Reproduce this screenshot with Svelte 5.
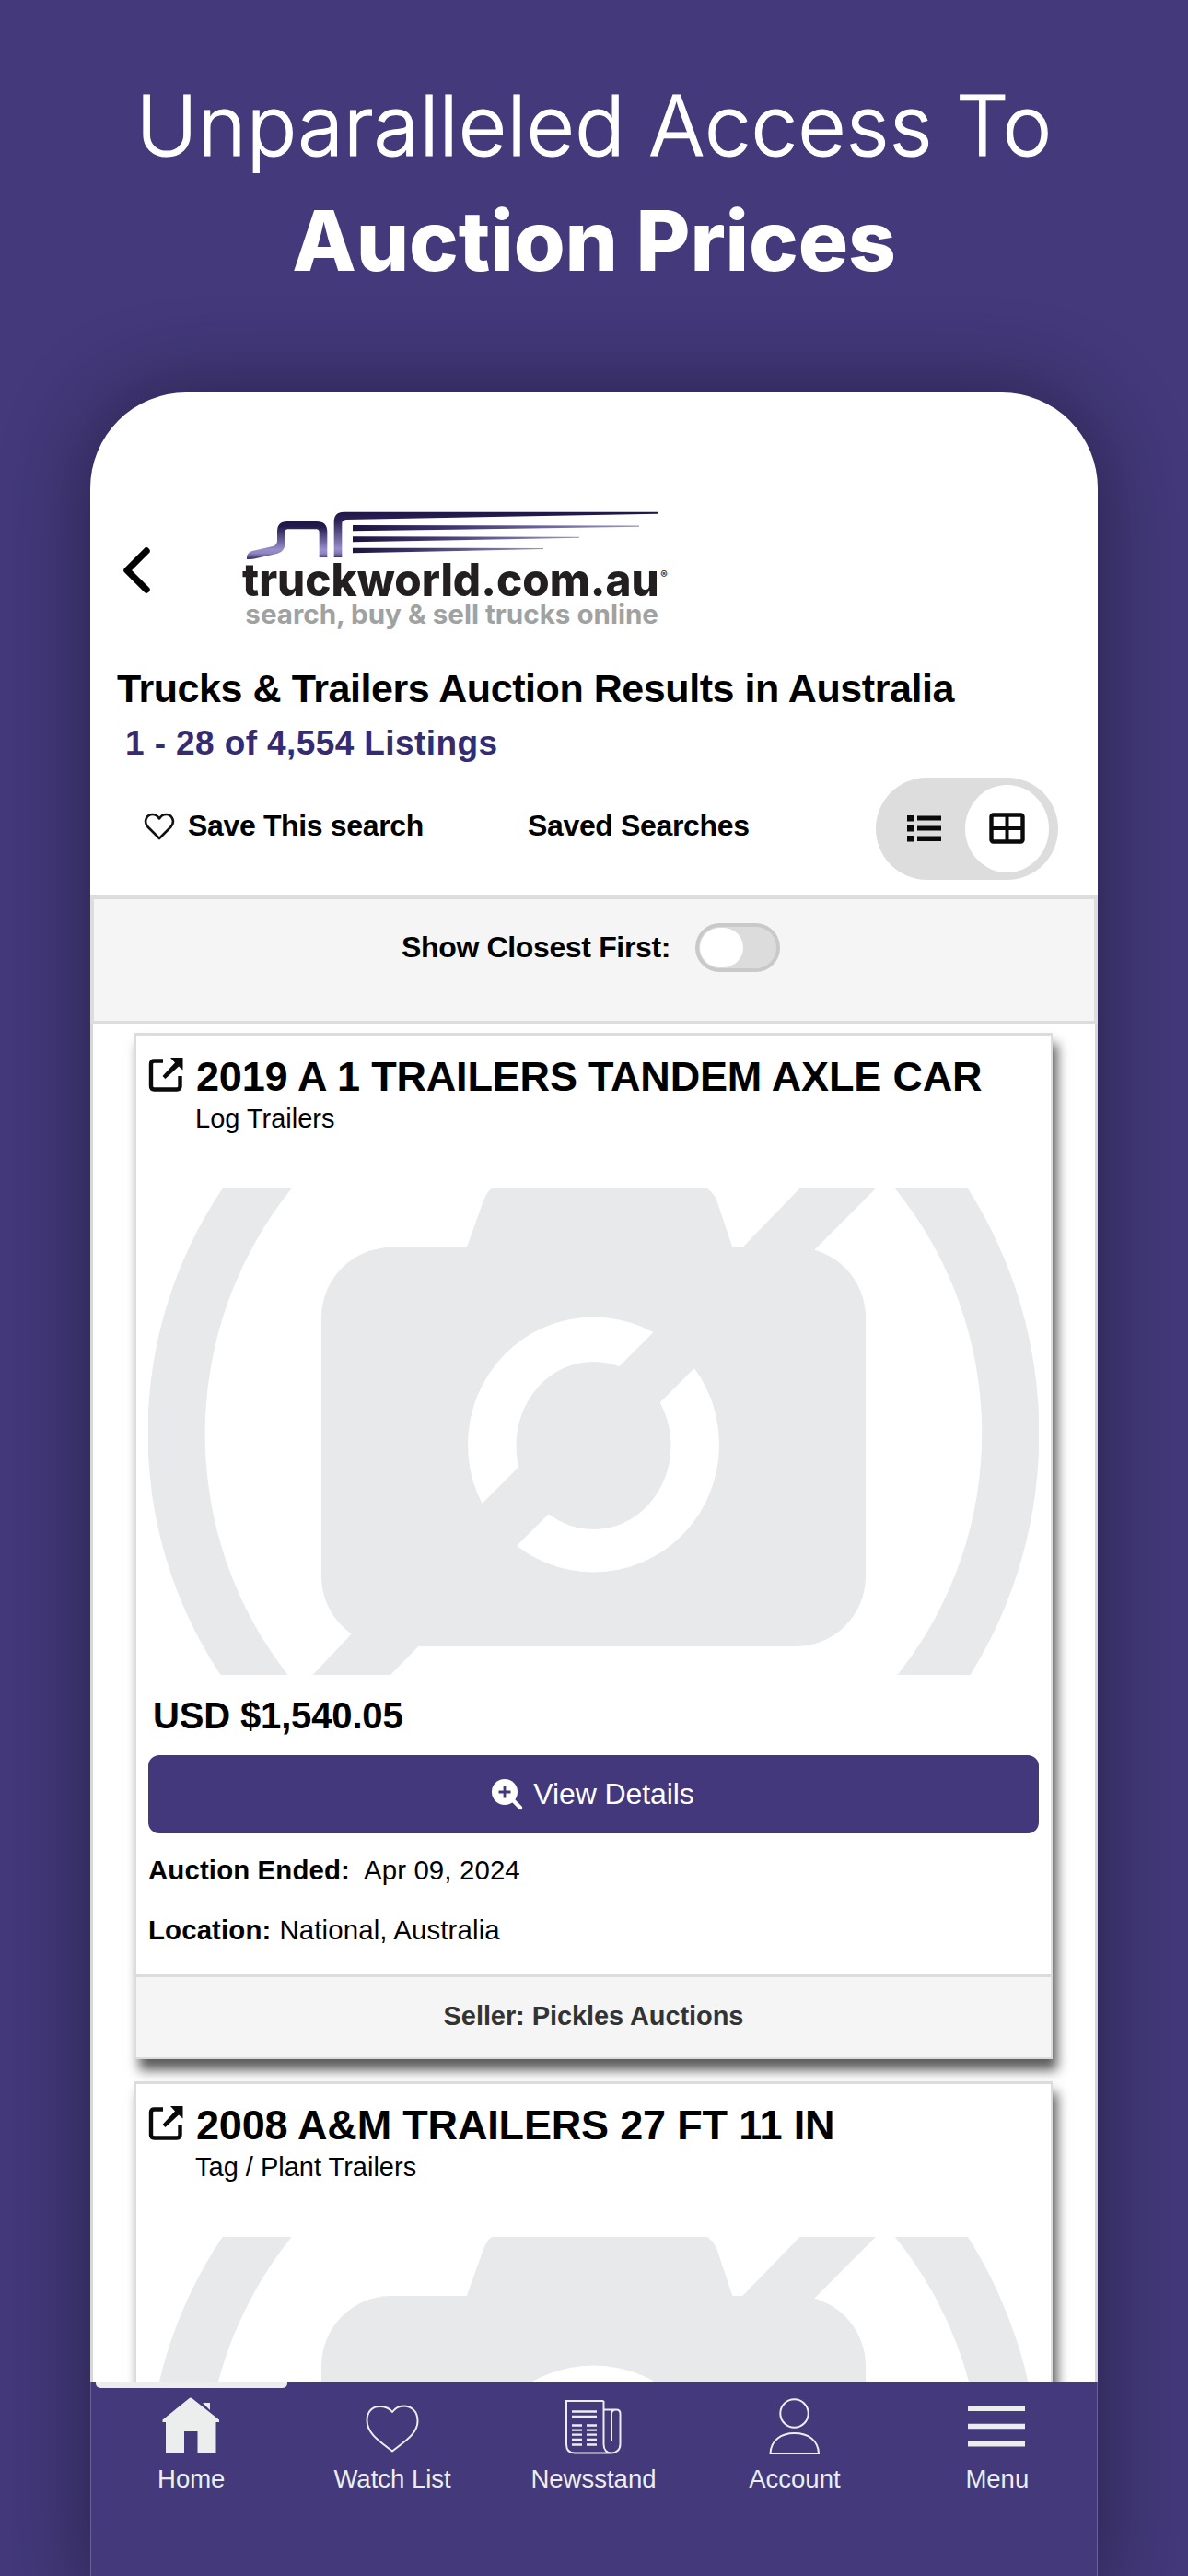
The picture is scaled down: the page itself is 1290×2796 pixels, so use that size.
<script>
  const listings = [
    {
      title: '2019 A 1 TRAILERS TANDEM AXLE CAR',
      category: 'Log Trailers',
      price: 'USD $1,540.05',
      ended: 'Apr 09, 2024',
      location: 'National, Australia',
      seller: 'Pickles Auctions'
    },
    {
      title: '2008 A&M TRAILERS 27 FT 11 IN',
      category: 'Tag / Plant Trailers',
      price: '',
      ended: '',
      location: '',
      seller: ''
    }
  ];
</script>

<main class="page">
  <h1 class="headline">
    <span class="light">Unparalleled Access To</span>
    <span class="strong">Auction Prices</span>
  </h1>

  <div class="phone">
    <header class="top">
      <svg class="back" viewBox="0 0 40 60" width="40" height="60">
        <path d="M31 9 L10 30 L31 51" fill="none" stroke="#000" stroke-width="7.400" stroke-linecap="round" stroke-linejoin="round" />
      </svg>
      <svg class="logo" viewBox="0 0 1500 450" width="500" height="150">
        <defs>
          <linearGradient id="cab" gradientUnits="userSpaceOnUse" x1="0" y1="60" x2="0" y2="186">
            <stop offset="0" stop-color="#1f1646" />
            <stop offset="0.15" stop-color="#231a4c" />
            <stop offset="0.75" stop-color="#968fc9" />
            <stop offset="0.85" stop-color="#8d85c0" />
            <stop offset="1" stop-color="#33285f" />
          </linearGradient>
          <linearGradient id="bar" gradientUnits="userSpaceOnUse" x1="0" y1="32" x2="0" y2="182">
            <stop offset="0" stop-color="#1f1646" />
            <stop offset="0.2" stop-color="#2d2359" />
            <stop offset="0.8" stop-color="#968fc9" />
            <stop offset="0.9" stop-color="#8078b3" />
            <stop offset="1" stop-color="#33285f" />
          </linearGradient>
          <linearGradient id="streak" x1="0" y1="0" x2="1" y2="0">
            <stop offset="0" stop-color="#1c133f" />
            <stop offset="0.35" stop-color="#40366f" />
            <stop offset="1" stop-color="#9a94cc" />
          </linearGradient>
        </defs>
        <path fill="url(#cab)" d="M84 186 V176 Q88 163 102 159 L168 144 Q183 140 183 125 V95 Q183 63 215 63 H312 Q346 63 346 97 V180 H320 V99 Q320 88 310 88 H218 Q208 88 208 99 V135 Q208 160 185 167 L112 184 Q100 187 84 186Z" />
        <path fill="url(#bar)" d="M368 180 V64 Q368 32 400 32 H1422 V38 L408 57 Q394 58 394 70 V180Z" />
        <path fill="url(#streak)" d="M429 75 L1362 76.500 V80 L429 94Z" />
        <path fill="url(#streak)" d="M429 112 L1167 113 V116 L429 130Z" />
        <path fill="url(#streak)" d="M429 149 L1050 150 V153 L429 166Z" />
        <text class="brand" x="69" y="307" textLength="1358" lengthAdjust="spacingAndGlyphs">truckworld.com.au</text>
        <text class="reg" x="1432" y="249">®</text>
        <text class="tag" x="79" y="397" textLength="1346" lengthAdjust="spacingAndGlyphs">search, buy &amp; sell trucks online</text>
      </svg>
    </header>

    <h2 class="title">Trucks &amp; Trailers Auction Results in Australia</h2>
    <p class="count">1 - 28 of 4,554 Listings</p>

    <div class="actions">
      <svg class="heart" viewBox="0 0 34 30" width="34" height="30">
        <path d="M17 28 L4.500 15.500 C-1 9 4 2 9.500 2 C13 2 15.500 4 17 6.500 C18.500 4 21 2 24.500 2 C30 2 35 9 29.500 15.500 Z" fill="none" stroke="#111" stroke-width="2.600" stroke-linejoin="round" />
      </svg>
      <span class="save">Save This search</span>
      <span class="saved">Saved Searches</span>
      <div class="views">
        <svg class="list-icon" viewBox="0 0 38 30" width="38" height="30">
          <path d="M0 1h8v6.500H0zM11 1.500h26v5H11zM0 11.500h8v7H0zM11 12.500h26v5H11zM0 23h8v6.500H0zM11 23.500h26v5.500H11z" fill="#0a0a0a" />
        </svg>
        <span class="knob">
          <svg viewBox="0 0 40 34" width="40" height="34">
            <rect x="2.500" y="2.500" width="34" height="29" rx="2" fill="none" stroke="#0a0a0a" stroke-width="4.400" />
            <path d="M19.500 2V32M2 17H37" stroke="#0a0a0a" stroke-width="4" />
          </svg>
        </span>
      </div>
    </div>

    <div class="closest">
      <span>Show Closest First:</span>
      <i class="switch"></i>
    </div>

    <section class="list">
      {#each listings as item}
        <article class="card">
          <div class="body">
            <div class="name">
              <svg viewBox="0 0 40 40" width="40" height="40">
                <path d="M16 5.500H6.500Q3 5.500 3 9V33Q3 36.500 6.500 36.500H31Q34.500 36.500 34.500 33V22" fill="none" stroke="#0a0a0a" stroke-width="4.400" />
                <path d="M24 2H37.500V15.500L33 11.500L18.500 25L15.500 22L29 7.500Z" fill="#0a0a0a" />
              </svg>
              <h3>{item.title}</h3>
            </div>
            <p class="category">{item.category}</p>
            <svg class="photo" viewBox="161 1290 967 528" width="967" height="528">
              <g fill="#e8e9eb">
                <path d="M241.600 1290 A475 475 0 0 0 239.500 1818 H312.500 A425 425 0 0 1 316.600 1290Z" />
                <path d="M1051 1290 A496 496 0 0 1 1053.600 1818 H974.500 A421 421 0 0 0 971.800 1290Z" />
                <rect x="349" y="1354" width="591" height="433" rx="76" />
                <path d="M506 1356 L524 1306 Q528 1294 534 1290 H768 Q774 1294 778 1302 L796 1356Z" />
                <path d="M868.400 1290 H950.800 L885 1356 L860 1380 L781 1380Z" />
                <path d="M339.600 1818 L385 1770 L420 1735 L500 1740 L424 1818Z" />
              </g>
              <path fill="#fff" fill-rule="evenodd" d="M508 1568 A136.500 138.500 0 1 1 781 1568 A136.500 138.500 0 1 1 508 1568Z M560.500 1569 A84 91 0 1 0 728.500 1569 A84 91 0 1 0 560.500 1569Z" />
              <path fill="#e8e9eb" d="M725.500 1430 L785 1454 L561 1678 L545 1694 L500 1655.500Z" />
            </svg>
            {#if item.price}
              <p class="price">{item.price}</p>
              <div class="button">
                <svg viewBox="0 0 36 36" width="36" height="36">
                  <circle cx="15" cy="15" r="14" fill="#fff" />
                  <path d="M24 24L32 32" stroke="#fff" stroke-width="4.500" stroke-linecap="round" />
                  <path d="M15 8.500V21.500M8.500 15H21.500" stroke="#43387b" stroke-width="2.800" />
                </svg>
                <span>View Details</span>
              </div>
              <p class="fact ended"><b>Auction Ended:</b><span>{item.ended}</span></p>
              <p class="fact place"><b>Location:</b><span>{item.location}</span></p>
            {/if}
          </div>
          {#if item.seller}
            <div class="seller">Seller: {item.seller}</div>
          {/if}
        </article>
      {/each}
    </section>

    <nav class="tabs">
      <div class="tab active">
        <svg viewBox="1 0 64 64" width="64" height="64" fill="#eceeee">
          <path d="M32 2.500 Q33 2.500 34 3.500 L63 26.500 V29 H59.500 V62 H39.500 V39 H25 V62 H5 V29 H1.500 V26.500 L30 3.500 Q31 2.500 32 2.500Z" />
          <path d="M45 8H53V16Z" />
        </svg>
        <span>Home</span>
      </div>
      <div class="tab">
        <svg viewBox="0 0 64 64" width="64" height="64" fill="none" stroke="#eceeee" stroke-width="2" stroke-linejoin="round">
          <path d="M32 60.500 C20 51 4.500 42 4.500 27 C4.500 17 11 12 18 12 C25 12 29 14 32 18 C35 14 38 11.500 44 11.500 C53 11.500 59.500 17 59.500 28 C59.500 42 44 51 32 60.500Z" />
        </svg>
        <span>Watch List</span>
      </div>
      <div class="tab">
        <svg viewBox="0 0 64 64" width="64" height="64" fill="none" stroke="#eceeee" stroke-width="2">
          <path d="M43.500 6H3V53Q3 62.500 12 62.500H52M43.500 6V53C43.500 59 47 62.500 52 62.500C57 62.500 61.500 59 61.500 53V20C61.500 17 60 15.500 57.500 15.500H43.500M52 50V20C52 17 53.500 15.500 57 15.500" />
          <path d="M9 17.500H36M9 23H36M9 32.500H20M25 32.500H36M9 37.700H20M25 37.700H36M9 42.700H20M25 42.700H36M9 48H20M25 48H36M9 53.500H20M25 53.500H36" stroke-width="2.300" />
        </svg>
        <span>Newsstand</span>
      </div>
      <div class="tab">
        <svg viewBox="0 0 64 64" width="64" height="64" fill="none" stroke="#eceeee" stroke-width="2">
          <ellipse cx="31.500" cy="19.500" rx="15.200" ry="15.300" />
          <path d="M5.500 63 C6 49 17 41 31.500 41 C47 41 57.500 49 58 63Z" />
        </svg>
        <span>Account</span>
      </div>
      <div class="tab">
        <svg viewBox="0 0 64 64" width="64" height="64" stroke="#eceeee" stroke-width="5.600">
          <path d="M2 14.300H64M2 33.500H64M2 52.800H64" />
        </svg>
        <span class="wide">Menu</span>
      </div>
    </nav>
  </div>
</main>

<style>
  :global(body) {
    background: #43397b;
  }
  h1, h2, h3, p {
    margin: 0;
  }
  svg {
    display: block;
    flex: none;
  }
  .page {
    width: 1290px;
    height: 2796px;
    overflow: hidden;
    background: #43397b;
    font-family: "Liberation Sans", Arial, sans-serif;
    color: #000;
  }
  .headline {
    height: 426px;
    box-sizing: border-box;
    padding-top: 74px;
    display: flex;
    flex-direction: column;
    align-items: center;
    font-family: Inter, sans-serif;
    font-size: 90.500px;
    line-height: 125px;
    color: #fff;
    white-space: nowrap;
  }
  .light {
    font-weight: 300;
    letter-spacing: 0.100px;
    -webkit-text-stroke: 1.200px #fff;
  }
  .strong {
    font-weight: 800;
    letter-spacing: -0.150px;
  }
  .phone {
    width: 1094px;
    height: 2400px;
    margin: 0 auto;
    border-radius: 104px 104px 0 0;
    background: #fff;
    box-shadow: 0 0 96px rgba(0, 0, 0, 0.42);
  }
  .top {
    height: 269px;
    box-sizing: border-box;
    padding: 119px 0 0 30px;
    display: flex;
    align-items: flex-start;
  }
  .back {
    margin-top: 44px;
  }
  .logo {
    margin-left: 72px;
  }
  .brand {
    font: 800 148px Inter, sans-serif;
    fill: #231f20;
  }
  .reg {
    font: 700 34px Inter, sans-serif;
    fill: #231f20;
  }
  .tag {
    font: 700 86px Inter, sans-serif;
    fill: #a0a2a2;
  }
  .title {
    margin-top: 22px;
    padding-left: 29px;
    font-size: 43px;
    line-height: 60px;
    letter-spacing: -0.430px;
    white-space: nowrap;
  }
  .count {
    padding-left: 38px;
    font-size: 37px;
    font-weight: 700;
    line-height: 60px;
    letter-spacing: 0.400px;
    color: #342b71;
  }
  .actions {
    height: 134px;
    box-sizing: border-box;
    padding: 0 43px 9px 58px;
    display: flex;
    align-items: center;
    font-size: 32px;
    font-weight: 700;
    letter-spacing: -0.350px;
    white-space: nowrap;
  }
  .heart {
    margin-bottom: 5px;
  }
  .save {
    width: 368px;
    padding: 0 0 6px 14px;
    box-sizing: border-box;
  }
  .saved {
    flex: 1;
    padding: 0 0 6px 15px;
  }
  .views {
    width: 198px;
    height: 111px;
    box-sizing: border-box;
    padding: 0 10px 0 34px;
    border-radius: 56px;
    background: #ddd;
    display: flex;
    align-items: center;
    justify-content: space-between;
  }
  .list-icon {
    margin-bottom: 2px;
  }
  .knob {
    width: 91px;
    height: 95px;
    box-sizing: border-box;
    padding-bottom: 2px;
    border-radius: 50%;
    background: #fff;
    display: flex;
    align-items: center;
    justify-content: center;
  }
  .closest {
    height: 140px;
    box-sizing: border-box;
    border: solid #dcdddc;
    border-width: 5px 4px 3px;
    padding: 26px 0 0 334px;
    background: #f5f5f5;
    display: flex;
    font-size: 32px;
    font-weight: 700;
    letter-spacing: -0.350px;
    line-height: 52px;
  }
  .switch {
    width: 92px;
    height: 53px;
    box-sizing: border-box;
    margin-left: 27px;
    border: 4px solid #c9c9c9;
    border-radius: 27px;
    background: #dcdcdc;
  }
  .switch::before {
    content: "";
    display: block;
    width: 47px;
    height: 43px;
    margin: 1px;
    border-radius: 22px;
    background: #fff;
  }
  .list {
    height: 1474px;
    box-sizing: border-box;
    padding: 10px 45px 0;
    border: solid #d6d8d8;
    border-width: 0 3px;
    overflow: hidden;
    display: flex;
    flex-direction: column;
    gap: 24px;
  }
  .card {
    flex: none;
    width: 997px;
    box-sizing: border-box;
    border: solid #dcdcdc;
    border-width: 3px 2px 2px;
    background: #fff;
    box-shadow: 5px 12px 12px rgba(0, 0, 0, 0.640);
  }
  .body {
    padding: 17px 13px 28px;
  }
  .name {
    display: flex;
    height: 56px;
    line-height: 56px;
    gap: 12px;
  }
  .name svg {
    margin-top: 5px;
  }
  h3 {
    font-size: 45px;
    letter-spacing: -0.180px;
    white-space: nowrap;
  }
  .category {
    padding-left: 51px;
    font-size: 29px;
    line-height: 34px;
  }
  .photo {
    margin-top: 59px;
  }
  .price {
    margin-top: 14px;
    padding-left: 5px;
    font-size: 40px;
    font-weight: 700;
    letter-spacing: -0.150px;
    line-height: 60px;
  }
  .button {
    height: 85px;
    box-sizing: border-box;
    margin-top: 13px;
    padding-right: 2px;
    border-radius: 12px;
    background: #43387b;
    color: #fff;
    display: flex;
    align-items: center;
    justify-content: center;
    gap: 10px;
    font-size: 32px;
    letter-spacing: -0.100px;
  }
  .fact {
    margin-top: 25px;
    display: flex;
    gap: 9px;
    font-size: 29.400px;
    letter-spacing: 0.130px;
    line-height: 40px;
  }
  .ended {
    margin-top: 20px;
    gap: 15px;
  }
  .seller {
    height: 87px;
    box-sizing: content-box;
    border-top: 3px solid #dcdcdc;
    background: #f5f5f5;
    color: #333;
    font-size: 29px;
    font-weight: 700;
    letter-spacing: -0.080px;
    line-height: 84px;
    text-align: center;
  }
  .tabs {
    height: 241px;
    box-sizing: border-box;
    border: solid #6a6298;
    border-width: 0 1px;
    background: #43397b;
    display: grid;
    grid-template-columns: repeat(5, 1fr);
    color: #eceeee;
    font-size: 27.500px;
  }
  .tab {
    position: relative;
    padding-top: 15px;
    display: flex;
    flex-direction: column;
    align-items: center;
  }
  .tab svg {
    margin-right: 1px;
  }
  .tab span {
    margin-top: 7px;
    margin-right: 1px;
    line-height: 40px;
  }
  .tab .wide {
    margin-right: 0;
    padding-left: 2px;
  }
  .active::before {
    content: "";
    position: absolute;
    top: 0;
    left: 5px;
    width: 208px;
    height: 7px;
    border-radius: 0 0 5px 5px;
    background: #eceeee;
  }
</style>
